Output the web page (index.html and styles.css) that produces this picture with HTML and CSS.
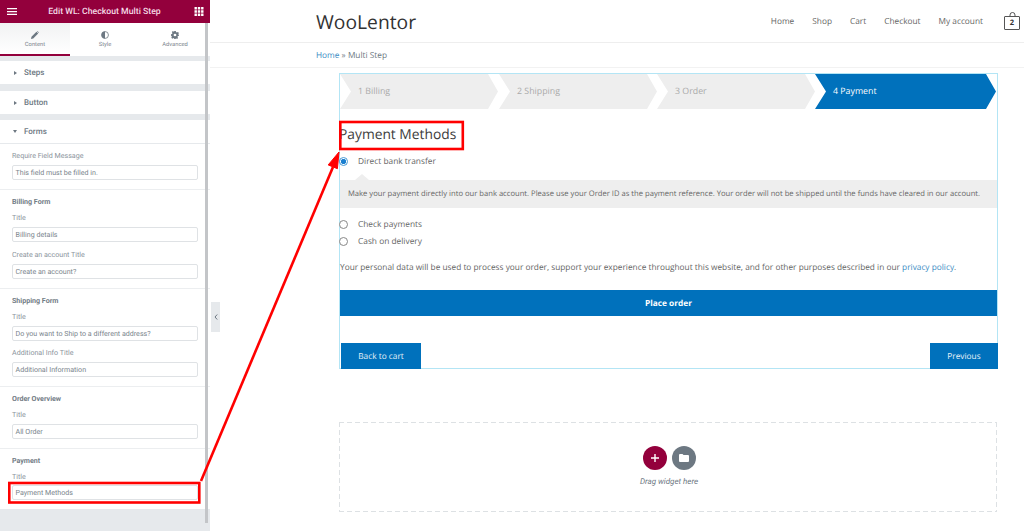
FILE: index.html
```html
<!DOCTYPE html>
<html lang="en">
<head>
<meta charset="utf-8">
<title>Edit WL: Checkout Multi Step</title>
<link rel="stylesheet" href="styles.css">
</head>
<body>
<div class="app">
  <aside class="panel">
    <header class="panel-head">
      <svg class="head-icon" viewBox="0 0 10 8"><path d="M0 .5h10v1.300H0zM0 3.400h10v1.300H0zM0 6.200h10v1.300H0z" fill="#fff"/></svg>
      <span class="panel-title">Edit WL: Checkout Multi Step</span>
      <svg class="head-icon" viewBox="0 0 9 9"><path d="M0 0h2.400v2.400H0zM3.300 0h2.400v2.400H3.300zM6.600 0H9v2.400H6.600zM0 3.300h2.400v2.400H0zM3.300 3.300h2.400v2.400H3.300zM6.600 3.300H9v2.400H6.600zM0 6.600h2.400V9H0zM3.300 6.600h2.400V9H3.300zM6.600 6.600H9V9H6.600z" fill="#fff"/></svg>
    </header>
    <nav class="tabs">
      <div class="tab tab-active">
        <svg class="tab-icon" viewBox="0 0 10 10"><path d="M0 10l.6-2.800L6.800 1l2.200 2.200-6.200 6.200zM7.400.4l.6-.4 2 2-.4.6z" fill="#6d7882"/></svg>
        <span>Content</span>
      </div>
      <div class="tab">
        <svg class="tab-icon" viewBox="0 0 10 10"><circle cx="5" cy="5" r="4.300" fill="#fff" stroke="#6d7882" stroke-width="1"/><path d="M5 .7a4.300 4.300 0 0 0 0 8.600z" fill="#6d7882"/></svg>
        <span>Style</span>
      </div>
      <div class="tab">
        <svg class="tab-icon" viewBox="0 0 10 10"><path d="M4 0h2l.3 1.400 1.100.5L8.600 1.100 10 2.500 9.100 3.700l.4 1L10 5v1l-1.400.3-.5 1.100.8 1.200L7.500 10l-1.200-.8-.3.1L5.800 10H4.200l-.3-.7-1-.4-1.200.8L.3 8.300l.8-1.200-.5-1L0 6V4l1.300-.3.5-1.100L1 1.400 2.400 0l1.200.8.4-.2z" fill="#6d7882"/><circle cx="5" cy="5" r="1.700" fill="#fff"/></svg>
        <span>Advanced</span>
      </div>
    </nav>
    <div class="section-bar section-bar-first"></div>
    <div class="section-row"><i class="caret caret-right"></i>Steps</div>
    <div class="section-bar"></div>
    <div class="section-row"><i class="caret caret-right"></i>Button</div>
    <div class="section-bar section-bar-tight"></div>
    <div class="section-row section-open"><i class="caret caret-down"></i>Forms</div>

    <div class="group group-message">
      <label class="field-label">Require Field Message</label>
      <div class="input">This field must be filled in.</div>
    </div>
    <div class="group group-billing">
      <h4 class="group-title">Billing Form</h4>
      <label class="field-label">Title</label>
      <div class="input">Billing details</div>
      <label class="field-label field-next">Create an account Title</label>
      <div class="input">Create an account?</div>
    </div>
    <div class="group group-shipping">
      <h4 class="group-title">Shipping Form</h4>
      <label class="field-label">Title</label>
      <div class="input">Do you want to Ship to a different address?</div>
      <label class="field-label field-next">Additional Info Title</label>
      <div class="input">Additional Information</div>
    </div>
    <div class="group group-order">
      <h4 class="group-title">Order Overview</h4>
      <label class="field-label">Title</label>
      <div class="input">All Order</div>
    </div>
    <div class="group group-last">
      <h4 class="group-title">Payment</h4>
      <label class="field-label">Title</label>
      <div class="input">Payment Methods</div>
    </div>
    <div class="panel-thumb"></div>
  </aside>

  <main class="site">
    <div class="collapse-tab"><svg viewBox="0 0 4 6"><path d="M3.200.5L1 3l2.200 2.500" fill="none" stroke="#6d7882" stroke-width="1"/></svg></div>
    <header class="site-head">
      <div class="logo">WooLentor</div>
      <nav class="site-nav">
        <a>Home</a><a>Shop</a><a>Cart</a><a>Checkout</a><a>My account</a>
        <span class="bag">
          <svg class="bag-handle" viewBox="0 0 7 5"><path d="M1 5V3a2.500 2.500 0 0 1 5 0v2" fill="none" stroke="#555" stroke-width="1"/></svg>
          <b>2</b>
        </span>
      </nav>
    </header>
    <div class="crumbs"><a>Home</a> » Multi Step</div>

    <section class="checkout">
      <div class="steps">
        <div class="step">1 Billing</div>
        <div class="step">2 Shipping</div>
        <div class="step">3 Order</div>
        <div class="step step-current">4 Payment</div>
      </div>
      <h3 class="pay-title">Payment Methods</h3>
      <div class="method method-first"><i class="radio radio-on"></i>Direct bank transfer</div>
      <div class="notice">Make your payment directly into our bank account. Please use your Order ID as the payment reference. Your order will not be shipped until the funds have cleared in our account.</div>
      <div class="method method-check"><i class="radio"></i>Check payments</div>
      <div class="method"><i class="radio"></i>Cash on delivery</div>
      <p class="privacy">Your personal data will be used to process your order, support your experience throughout this website, and for other purposes described in our <a>privacy policy</a>.</p>
      <div class="place-order">Place order</div>
      <div class="actions">
        <span class="btn btn-back">Back to cart</span>
        <span class="btn btn-prev">Previous</span>
      </div>
    </section>

    <section class="dropzone">
      <div class="drop-buttons">
        <span class="drop-btn drop-add"><svg viewBox="0 0 8 8"><path d="M3.300 0h1.400v3.300H8v1.400H4.700V8H3.300V4.700H0V3.300h3.300z" fill="#fff"/></svg></span>
        <span class="drop-btn drop-folder"><svg viewBox="0 0 10 8"><path d="M0 1a1 1 0 0 1 1-1h2.500l1 1H9a1 1 0 0 1 1 1v5a1 1 0 0 1-1 1H1a1 1 0 0 1-1-1z" fill="#fff"/></svg></span>
      </div>
      <div class="drop-text">Drag widget here</div>
    </section>
  </main>
</div>

<svg class="annotation" viewBox="0 0 1024 531">
  <g fill="none" stroke="#f00" stroke-width="2.600">
    <rect x="9.300" y="483" width="190" height="19.500"/>
    <rect x="340.300" y="122" width="122.500" height="27"/>
    <path d="M201 481L333 167"/>
  </g>
  <path d="M339 152L337.400 168.700L328.200 164.900z" fill="#f00" stroke="#f00" stroke-width="1"/>
</svg>
</body>
</html>
```
FILE: styles.css
```css
* { box-sizing: border-box; }
html, body { margin: 0; height: 531px; overflow: hidden; background: #fff; }
body { position: relative; font-family: "Open Sans", sans-serif; color: #555; text-rendering: geometricPrecision; }
.app { display: flex; height: 531px; }

/* editor panel */
.panel { position: relative; width: 210px; flex: none; height: 531px; background: #e6e9ec; font-family: Roboto, sans-serif; }
.panel-thumb { position: absolute; left: 205px; top: 23px; width: 3px; height: 500px; background: #c3c5c8; }
.panel-head { height: 23px; background: #93003c; color: #fff; display: flex; align-items: center; justify-content: space-between; padding: 0 6px 0 7px; }
.panel-title { font-size: 8.700px; font-weight: 500; color: #f5dbe6; margin-right: 2px; }
.head-icon { width: 10px; height: 9px; display: block; }
.tabs { display: flex; height: 33px; background: #fff; }
.tab { flex: 1; display: flex; flex-direction: column; align-items: center; padding-top: 8px; font-size: 5.800px; color: #7d868e; gap: 3px; }
.tab-active { border-bottom: 2px solid #93003c; background: linear-gradient(#f1f2f3, #fff); }
.tab-icon { width: 8px; height: 8px; display: block; }
.section-bar { height: 7px; background: #e6e9ec; }
.section-bar-first { height: 5px; }
.section-bar-tight { height: 6px; }
.section-row { height: 23px; background: #fff; display: flex; align-items: center; padding-left: 14px; font-size: 8px; font-weight: 500; color: #6d7882; }
.section-open { border-bottom: 1px solid #e6e9ec; height: 24px; }
.caret { width: 0; height: 0; margin-right: 7px; display: block; }
.caret-right { border-left: 3px solid #6d7882; border-top: 2.500px solid transparent; border-bottom: 2.500px solid transparent; }
.caret-down { margin-left: -1px; border-top: 3px solid #6d7882; border-left: 2.500px solid transparent; border-right: 2.500px solid transparent; }
.group { background: #fff; padding: 6px 12px 8px 12px; border-bottom: 1px solid #eceef0; }
.group-message { padding-bottom: 9px; }
.group-billing { padding-bottom: 9px; }
.group-shipping { padding-bottom: 9px; }
.group-shipping .field-next { margin-top: 6px; }
.group-order { padding-bottom: 8.500px; }
.group-last { border-bottom: 0; padding-bottom: 9px; }
.group-last .field-label { margin-bottom: 3px; }
.group-title { margin: 0 0 5px; font-size: 7.100px; line-height: 11px; font-weight: 700; color: #737d86; }
.field-label { display: block; font-size: 7.100px; line-height: 11px; color: #8b949c; margin-bottom: 4px; }
.field-next { margin-top: 7px; }
.input { height: 15px; border: 1px solid #dfe2e5; border-radius: 2px; padding: 0 2.500px; font-size: 7.100px; line-height: 13px; color: #7a848c; background: #fff; }

/* site preview */
.site { position: relative; flex: 1; min-width: 0; }
.collapse-tab { position: absolute; left: 1px; top: 302px; width: 9px; height: 30px; background: #e6e9ec; display: flex; align-items: center; justify-content: center; }
.collapse-tab svg { width: 4px; height: 6px; display: block; }
.site-head { height: 43px; border-bottom: 1px solid #eee; padding: 0 4px 0 106px; display: flex; align-items: center; justify-content: space-between; }
.logo { font-size: 19.300px; color: #333; }
.site-nav { display: flex; align-items: center; gap: 18px; padding-top: 1px; font-size: 8.300px; color: #666; }
.bag { position: relative; width: 16px; height: 14px; margin-left: 3px; margin-top: 2px; border: 1px solid #555; border-radius: 1px; font-size: 7.500px; line-height: 12px; text-align: center; color: #333; }
.bag b { font-weight: 700; }
.bag-handle { position: absolute; left: 3.500px; top: -5px; width: 7px; height: 5px; }
.crumbs { height: 25px; border-bottom: 1px solid #f2f2f2; padding-left: 106px; font-size: 8.300px; line-height: 25px; color: #6d7882; }
.crumbs a { color: #3b8dc4; }
.checkout { width: 659px; height: 296px; margin: 5px 0 0 129px; border: 1px solid #b3e5f5; position: relative; }
.steps { display: flex; height: 35px; }
.step { width: 158px; flex: none; background: #eee; color: #aaa; font-size: 8.800px; line-height: 35px; padding-left: 18px; clip-path: polygon(0 0, calc(100% - 10px) 0, 100% 50%, calc(100% - 10px) 100%, 0 100%, 11px 50%); }
.step:nth-child(2) { margin-left: 1px; }
.step-current { width: 181px; background: #0071bc; color: #fff; }
.pay-title { margin: 15px 0 0 -1px; font-size: 13.800px; line-height: 22px; font-weight: 400; color: #3d3d3d; }
.method { display: flex; align-items: center; height: 17px; font-size: 8.350px; color: #666; }
.method-first { margin-top: 7px; }
.method-check { margin-top: 8px; }
.radio { width: 9px; height: 9px; margin: 0 10px 0 -1px; border: 1px solid #888; border-radius: 50%; flex: none; background: #fff; }
.radio-on { border-color: #4a9ad4; background: radial-gradient(circle, #1a7fd0 0 2.200px, #fff 3px); }
.notice { position: relative; margin-top: 10px; height: 28px; background: #eee; padding-left: 8px; font-size: 7.640px; line-height: 28px; color: #666; white-space: nowrap; }
.notice::before { content: ""; position: absolute; left: 15px; top: -6px; border-left: 7px solid transparent; border-right: 7px solid transparent; border-bottom: 6px solid #eee; }
.privacy { margin: 10px 0 0; font-size: 8.300px; line-height: 15px; color: #666; white-space: nowrap; }
.privacy a { color: #3b8dc4; }
.place-order { margin-top: 15px; height: 26px; background: #0071bc; color: #fff; font-size: 8.300px; font-weight: 700; line-height: 27px; text-align: center; }
.actions { position: absolute; left: 1px; right: -1px; bottom: -1px; display: flex; justify-content: space-between; }
.btn { height: 26px; background: #0071bc; color: #e6f1f8; font-size: 8.300px; line-height: 27px; text-align: center; }
.btn-back { width: 80px; }
.btn-prev { width: 68px; }
.dropzone { width: 658px; height: 90px; margin: 53px 0 0 129px; background-image: linear-gradient(90deg, #dde1e4 5px, transparent 5px), linear-gradient(90deg, #dde1e4 5px, transparent 5px), linear-gradient(#dde1e4 5px, transparent 5px), linear-gradient(#dde1e4 5px, transparent 5px); background-size: 8px 1px, 8px 1px, 1px 8px, 1px 8px; background-position: 0 0, 0 100%, 0 0, 100% 0; background-repeat: repeat-x, repeat-x, repeat-y, repeat-y; display: flex; flex-direction: column; align-items: center; padding: 24px 0 0 2px; }
.drop-buttons { display: flex; gap: 5px; }
.drop-btn { width: 24px; height: 24px; border-radius: 50%; display: flex; align-items: center; justify-content: center; }
.drop-add { background: #93003c; }
.drop-add svg { width: 8px; height: 8px; display: block; }
.drop-folder { background: #6d7882; }
.drop-folder svg { width: 10px; height: 8px; display: block; }
.drop-text { margin-top: 6px; font-family: Roboto, sans-serif; font-style: italic; font-size: 8px; line-height: 11px; color: #6d7882; }

/* red callouts drawn over the page */
.annotation { position: absolute; left: 0; top: 0; width: 1024px; height: 531px; pointer-events: none; }
```
